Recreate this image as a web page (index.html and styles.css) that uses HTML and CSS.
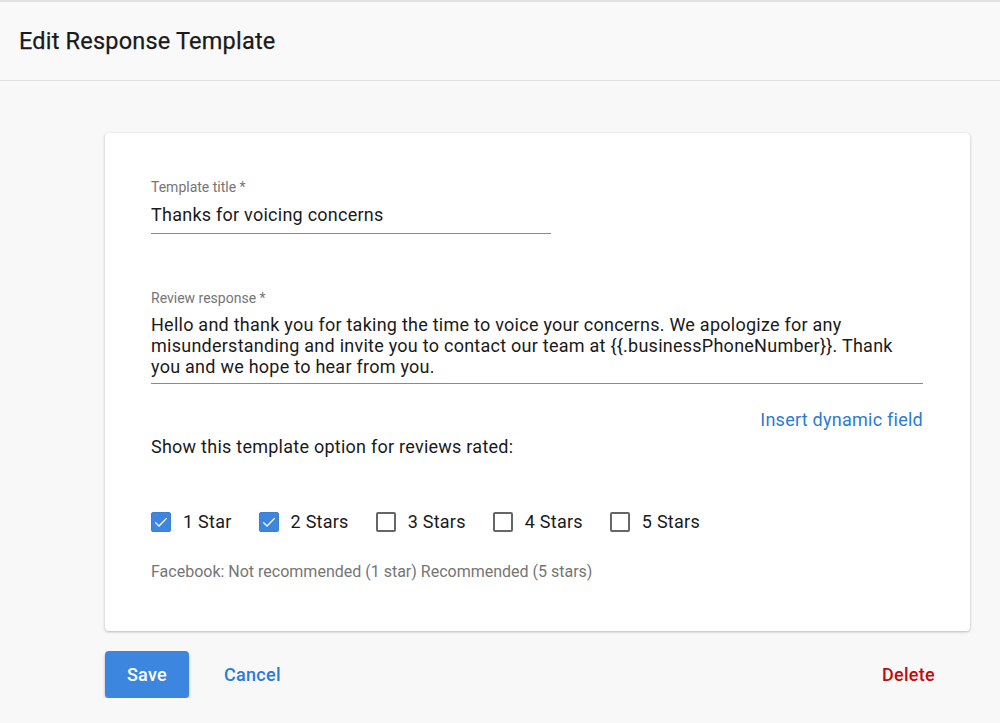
FILE: index.html
```html
<!DOCTYPE html>
<html>
<head>
<meta charset="utf-8">
<link rel="stylesheet" href="styles.css">
</head>
<body>
<header class="top-bar">
  <h1 class="page-title">Edit Response Template</h1>
</header>
<main class="content">
  <section class="card">
    <div class="field field-title">
      <label class="field-label">Template title *</label>
      <div class="field-value">Thanks for voicing concerns</div>
    </div>
    <div class="field field-response">
      <label class="field-label">Review response *</label>
      <div class="field-value multiline">Hello and thank you for taking the time to voice your concerns. We apologize for any misunderstanding and invite you to contact our team at {{.businessPhoneNumber}}. Thank you and we hope to hear from you.</div>
    </div>
    <div class="insert-row"><a class="link">Insert dynamic field</a></div>
    <p class="rated-label">Show this template option for reviews rated:</p>
    <div class="checks">
      <label class="check"><span class="box checked"><svg viewBox="0 0 20 20"><path d="M3.6 10.4l4.2 4.1 8.6-8.8" fill="none" stroke="#fff" stroke-width="1.5"/></svg></span>1 Star</label>
      <label class="check"><span class="box checked"><svg viewBox="0 0 20 20"><path d="M3.6 10.4l4.2 4.1 8.6-8.8" fill="none" stroke="#fff" stroke-width="1.5"/></svg></span>2 Stars</label>
      <label class="check"><span class="box"></span>3 Stars</label>
      <label class="check"><span class="box"></span>4 Stars</label>
      <label class="check"><span class="box"></span>5 Stars</label>
    </div>
    <p class="hint">Facebook: Not recommended (1 star) Recommended (5 stars)</p>
  </section>
  <div class="actions">
    <button class="btn-save">Save</button>
    <a class="btn-cancel">Cancel</a>
    <a class="btn-delete">Delete</a>
  </div>
</main>
</body>
</html>
```
FILE: styles.css
```css
* { box-sizing: border-box; }
html, body {
  margin: 0;
  padding: 0;
  background: #f8f8f8;
  font-family: Roboto, "Liberation Sans", sans-serif;
  color: #212121;
}
.top-bar {
  height: 81px;
  border-top: 2px solid #e2e2e2;
  border-bottom: 1px solid #dedede;
  display: flex;
  align-items: center;
  padding-left: 19px;
  background: #f9f9f9;
}
.page-title {
  margin: 0;
  font-size: 23.5px;
  font-weight: 400;
  letter-spacing: 0.2px;
  color: #1a1a1a;
  -webkit-text-stroke: 0.25px #1a1a1a;
}
.content {
  padding: 52px 30px 0 105px;
}
.card {
  background: #fff;
  border-radius: 4px;
  box-shadow: 0 1px 3px rgba(0,0,0,0.25), 0 0 1px rgba(0,0,0,0.08);
  padding: 46px 47px 44px 46px;
  height: 498px;
}
.field-label {
  display: block;
  font-size: 14px;
  color: #757575;
  line-height: 16px;
}
.field-value {
  font-size: 18px;
  letter-spacing: 0.25px;
  line-height: 21px;
  color: #1a1a1a;
  border-bottom: 1px solid #8a8a8a;
  padding: 9px 0 8px;
}
.field-title .field-value { width: 400px; }
.field-response { margin-top: 56px; }
.multiline { padding: 8px 0 6px; }
.insert-row {
  display: flex;
  justify-content: flex-end;
  margin-top: 25px;
}
.link {
  color: #2a7bd7;
  font-size: 18px;
  letter-spacing: 0.25px;
  line-height: 22px;
}
.rated-label {
  margin: 6px 0 0;
  font-size: 18px;
  letter-spacing: 0.25px;
  line-height: 20px;
  color: #1a1a1a;
}
.checks {
  display: flex;
  gap: 27px;
  margin-top: 54px;
}
.check {
  display: flex;
  align-items: center;
  gap: 12px;
  font-size: 18px;
  letter-spacing: 0.25px;
  color: #1a1a1a;
}
.box {
  width: 20px;
  height: 20px;
  border: 2px solid #666;
  border-radius: 2px;
  display: inline-flex;
  align-items: center;
  justify-content: center;
}
.box.checked {
  background: #3e86dd;
  border: 1px solid #3a7fd4;
}
.box svg { width: 18px; height: 18px; }
.hint {
  margin: 30px 0 0;
  font-size: 16px;
  color: #757575;
}
.actions {
  display: flex;
  align-items: center;
  margin-top: 20px;
  padding-right: 35px;
}
.btn-save {
  width: 84px;
  height: 47px;
  border: none;
  border-radius: 4px;
  background: #3d86df;
  color: #fff;
  font-family: Roboto, "Liberation Sans", sans-serif;
  font-size: 18px;
  letter-spacing: 0.3px;
  font-weight: 500;
  box-shadow: 0 2px 3px rgba(0,0,0,0.28);
}
.btn-cancel {
  margin-left: 35px;
  color: #2a7bd7;
  font-size: 18px;
  letter-spacing: 0.3px;
  font-weight: 500;
}
.btn-delete {
  margin-left: auto;
  color: #c00c0c;
  font-size: 18px;
  letter-spacing: 0.3px;
  font-weight: 500;
}
```
